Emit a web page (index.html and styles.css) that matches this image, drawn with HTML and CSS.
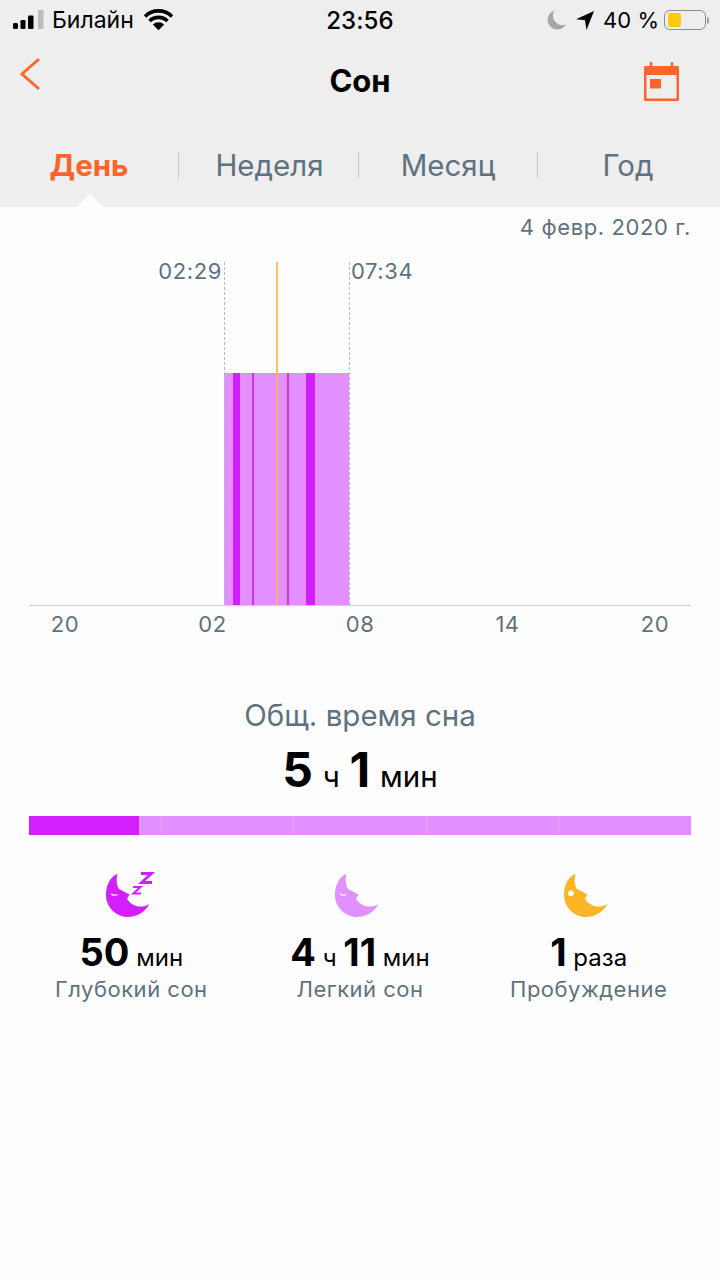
FILE: index.html
```html
<!DOCTYPE html>
<html lang="ru">
<head>
<meta charset="utf-8">
<title>Сон</title>
<link rel="stylesheet" href="styles.css">
</head>
<body>
<div class="page">
  <header class="head">
    <div class="status">
      <div class="status-left">
        <svg class="signal" width="31" height="20" viewBox="0 0 31 20">
          <rect x="0" y="13" width="5" height="6" rx="1.5" fill="#000"/>
          <rect x="7.5" y="10" width="5" height="9" rx="1.2" fill="#000"/>
          <rect x="15" y="5.5" width="5.5" height="13.5" rx="1.2" fill="#000"/>
          <rect x="25" y="0" width="5.5" height="19" rx="1.2" fill="#bdbdbd"/>
        </svg>
        <span class="carrier">Билайн</span>
        <svg class="wifi" width="29" height="22" viewBox="0 0 29 22">
          <path d="M1 7.5a19 19 0 0 1 27 0M5.5 12a13 13 0 0 1 18 0" fill="none" stroke="#000" stroke-width="3.6"/>
          <path d="M8.8 15.6a8.2 8.2 0 0 1 11.4 0L14.500 21.300Z" fill="#000"/>
        </svg>
      </div>
      <div class="clock">23:56</div>
      <div class="status-right">
        <svg class="dnd" width="19" height="20" viewBox="0 0 19 20">
          <path d="M7.500 .5A9.700 9.700 0 1 0 18.800 14.500 9.500 9.500 0 0 1 7.500 .5Z" fill="#a6a6a6"/>
        </svg>
        <svg class="loc" width="18" height="19" viewBox="0 0 18 19">
          <path d="M18 0 0 8.300 9 9.300 10.500 19Z" fill="#000"/>
        </svg>
        <span class="pct">40 %</span>
        <div class="battery"><div class="battery-fill"></div></div>
        <div class="battery-nub"></div>
      </div>
    </div>
    <div class="nav">
      <svg class="back" width="22" height="36" viewBox="0 0 22 36">
        <path d="M19 4 2 19 19 34" fill="none" stroke="#f96a2c" stroke-width="3"/>
      </svg>
      <h1 class="title">Сон</h1>
      <svg class="cal" width="37" height="40" viewBox="0 0 37 40">
        <path d="M8 0v6M29 0v6" stroke="#f9652a" stroke-width="2.500"/>
        <rect x="1" y="4" width="35" height="35" rx="1.500" fill="#f9652a"/>
        <rect x="3.500" y="13" width="30" height="23.500" fill="#eee"/>
        <rect x="7" y="17" width="11" height="9.500" fill="#f9652a"/>
      </svg>
    </div>
    <nav class="tabs">
      <div class="tab tab-on">День</div>
      <div class="tab tab-week">Неделя</div>
      <div class="tab">Месяц</div>
      <div class="tab tab-last">Год</div>
      <div class="notch"></div>
    </nav>
  </header>

  <main class="body">
    <div class="date">4 февр. 2020 г.</div>
    <section class="chart">
      <span class="t-start">02:29</span>
      <span class="t-end">07:34</span>
      <div class="edge edge-l"></div>
      <div class="edge edge-r"></div>
      <div class="sleep">
        <div class="seg lt" style="width:9px"></div>
        <div class="seg dp" style="width:7px"></div>
        <div class="seg lt" style="width:12px"></div>
        <div class="seg thin" style="width:2px"></div>
        <div class="seg lt" style="width:33px"></div>
        <div class="seg thin" style="width:2px"></div>
        <div class="seg lt" style="width:17px"></div>
        <div class="seg dp" style="width:9px"></div>
        <div class="seg lt" style="width:34px"></div>
      </div>
      <div class="now"></div>
    </section>
    <div class="axis">
      <span>20</span><span>02</span><span>08</span><span>14</span><span>20</span>
    </div>

    <section class="total">
      <div class="total-label">Общ. время сна</div>
      <div class="total-value"><b>5</b> <span>ч</span> <b>1</b> <span>мин</span></div>
    </section>

    <div class="bar">
      <div class="bar-deep"></div>
      <div class="bar-part" style="width:23px"></div>
      <div class="bar-part" style="width:132px"></div>
      <div class="bar-part" style="width:133px"></div>
      <div class="bar-part" style="width:132px"></div>
      <div class="bar-part bar-end"></div>
    </div>

    <section class="stats">
      <div class="stat">
        <svg class="moon" width="48" height="48" viewBox="0 0 48 48">
          <path class="c-deep" d="M12.300 2C11 9 12 14 14 17L24.500 22.500 22 27 24 29.500C28 34 36 37 44.500 32 40 40 32 45 23 45 11 45 1 35 1 23 1 13 5 5 12.300 2Z"/>
          <path d="M6 22c2 1.500 4 1.500 6.500.5" fill="none" stroke="#fff" stroke-width="1.200"/>
          <path d="M36 1.500h10.500L36.500 10.500H47" fill="none" stroke="#d31ffb" stroke-width="2.800"/>
          <path d="M28 15h7.500l-7 6.500H36" fill="none" stroke="#d31ffb" stroke-width="2"/>
        </svg>
        <div class="num"><b>50</b> <span>мин</span></div>
        <div class="cap">Глубокий сон</div>
      </div>
      <div class="stat">
        <svg class="moon" width="48" height="48" viewBox="0 0 48 48">
          <path class="c-light" d="M12.300 2C11 9 12 14 14 17L24.500 22.500 22 27 24 29.500C28 34 36 37 44.500 32 40 40 32 45 23 45 11 45 1 35 1 23 1 13 5 5 12.300 2Z"/>
          <path d="M6 22c2 1.500 4 1.500 6.500.5" fill="none" stroke="#fff" stroke-width="1.200"/>
        </svg>
        <div class="num"><b>4</b> <span>ч</span> <b>11</b> <span>мин</span></div>
        <div class="cap">Легкий сон</div>
      </div>
      <div class="stat">
        <svg class="moon" width="48" height="48" viewBox="0 0 48 48">
          <path class="c-yellow" d="M12.300 2C11 9 12 14 14 17L24.500 22.500 22 27 24 29.500C28 34 36 37 44.500 32 40 40 32 45 23 45 11 45 1 35 1 23 1 13 5 5 12.300 2Z"/>
          <circle cx="8" cy="21.300" r="2.800" fill="#fff"/>
        </svg>
        <div class="num"><b>1</b> <span>раза</span></div>
        <div class="cap">Пробуждение</div>
      </div>
    </section>
  </main>
</div>
</body>
</html>
```
FILE: styles.css
```css
* { box-sizing: border-box; }
html, body { margin: 0; padding: 0; }
body {
  width: 720px;
  height: 1280px;
  overflow: hidden;
  background: #fdfdfd;
  font-family: Inter, "Noto Sans", "Liberation Sans", sans-serif;
  color: #000;
}
.page { display: flex; flex-direction: column; height: 1280px; }

/* header */
.head { background: #eeeeee; height: 207px; flex: none; display: flex; flex-direction: column; }
.status {
  height: 40px;
  display: grid;
  grid-template-columns: 1fr auto 1fr;
  align-items: center;
  padding: 0 11px 0 13px;
  font-size: 23px;
}
.status-left { display: flex; align-items: center; }
.signal { margin-right: 8px; margin-top: -1px; }
.carrier { margin-right: 10px; line-height: 40px; }
.wifi { margin-top: -1px; }
.clock { font-weight: 500; font-size: 24px; letter-spacing: .1px; margin-right: 2px; }
.status-right { display: flex; align-items: center; justify-content: flex-end; }
.dnd { margin-right: 10px; }
.loc { margin-right: 9px; }
.pct { margin-right: 5px; font-size: 22px; white-space: nowrap; }
.battery {
  width: 42px; height: 20px;
  border: 1.500px solid #8c8c8c;
  border-radius: 6px;
  padding: 2px 3px;
}
.battery-fill { width: 13px; height: 100%; background: #fdc90b; border-radius: 2px; }
.battery-nub { width: 2px; height: 7px; background: #a0a0a0; margin-left: 1px; border-radius: 0 2px 2px 0; }

.nav {
  height: 82px;
  padding: 15px 20px 0;
  display: grid;
  grid-template-columns: 1fr auto 1fr;
  align-items: start;
}
.back { margin-top: 0; }
.title { margin: 8px 0 0; font-size: 31px; line-height: 36px; font-weight: 700; }
.cal { justify-self: end; margin: 7px 20px 0 0; }

.tabs {
  position: relative;
  display: grid;
  grid-template-columns: 179px 180px 179px 180px;
  height: 85px;
  padding-top: 30px;
  align-items: start;
  font-size: 29.500px;
  color: #5f717e;
}
.tab { height: 26px; line-height: 26px; text-align: center; border-right: 1px solid #c4c8ca; }
.tab-week { padding-left: 2px; }
.tab-last { border-right: 0; }
.tab-on { color: #f9652a; font-weight: 700; }
.notch {
  position: absolute;
  left: 76px;
  bottom: 0;
  width: 0; height: 0;
  border-left: 14px solid transparent;
  border-right: 14px solid transparent;
  border-bottom: 13px solid #fdfdfd;
}

/* body */
.body { flex: 1; padding: 0 29px; display: flex; flex-direction: column; }
.date { height: 55px; padding-top: 7px; line-height: 26px; text-align: right; font-size: 22px; letter-spacing: .6px; color: #5f717e; }
.chart { position: relative; height: 344px; border-bottom: 1px solid #cfd2d4; flex: none; }
.t-start, .t-end { position: absolute; top: -4px; font-size: 22px; line-height: 26px; color: #5f717e; letter-spacing: .6px; }
.t-start { right: 469px; }
.t-end { left: 322px; }
.edge { position: absolute; top: 0; bottom: 0; width: 0; border-left: 1.500px dashed #b9b9c0; z-index: 2; }
.edge-l { left: 195px; }
.edge-r { left: 319.500px; }
.sleep { position: absolute; left: 195px; width: 125px; top: 111px; bottom: 0; display: flex; }
.seg { flex: none; }
.lt { background: #e28fff; }
.dp { background: #d31ffb; }
.thin { background: #c935ef; }
.now { position: absolute; left: 247px; top: 0; bottom: 0; width: 1.500px; background: rgba(251, 180, 80, .85); z-index: 3; }

.axis { display: flex; justify-content: space-between; padding: 5px 21px 0; font-size: 22px; line-height: 26px; letter-spacing: .5px; color: #5f717e; flex: none; height: 92px; }
.axis span { width: 30px; text-align: center; }

.total { text-align: center; flex: none; }
.total-label { font-size: 29.500px; line-height: 34px; color: #5f717e; }
.total-value { margin-top: 7px; height: 77px; line-height: 62px; font-size: 29.500px; white-space: nowrap; word-spacing: 1.500px; }
.total-value b { font-size: 48px; font-weight: 700; }

.bar { display: flex; height: 19px; flex: none; }
.bar-deep { width: 110px; background: #d31ffb; flex: none; }
.bar-part { background: #e28fff; border-right: 1px solid #e8a6ff; flex: none; }
.bar-end { flex: 1; border-right: 0; }

.stats {
  display: grid;
  grid-template-columns: repeat(3, 1fr);
  margin: 37px -12px 0;
  text-align: center;
}
.stat { display: flex; flex-direction: column; align-items: center; }
.moon { margin-right: 4px; overflow: visible; }
.c-deep { fill: #d31ffb; }
.c-light { fill: #e28fff; }
.c-yellow { fill: #fdb526; }
.num { margin-top: 11px; line-height: 42px; font-size: 24px; white-space: nowrap; }
.num b { font-size: 38px; font-weight: 700; }
.cap { margin-top: -3px; font-size: 22px; line-height: 26px; letter-spacing: .5px; color: #5f717e; }
```
